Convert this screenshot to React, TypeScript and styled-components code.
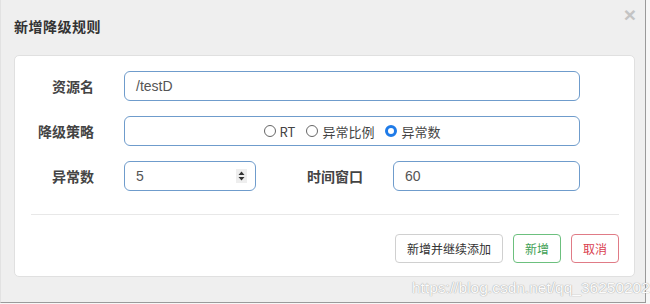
import styled, {createGlobalStyle} from 'styled-components'
import {FC} from 'react'

const Global = createGlobalStyle`
  html, body {
    margin: 0;
    padding: 0;
    background: #f7f7f7;
    font-family: "Noto Sans CJK SC", "Liberation Sans", sans-serif;
  }
`

const Dialog = styled.div`
  position: relative;
  box-sizing: border-box;
  width: 646px;
  height: 303px;
  background: #efefef;
  border-right: 1px solid #9a9a9a;
  border-bottom: 1px solid #9a9a9a;
  border-left: 1px solid #e2e2e2;
  padding: 14px 11px 0 13px;
`

const Header = styled.div`
  display: flex;
  justify-content: space-between;
  align-items: flex-start;
  height: 41px;
`

const Title = styled.h4`
  margin: 2px 0 0;
  font-size: 14px;
  font-weight: bold;
  color: #333;
  letter-spacing: 0.5px;
`

const Close = styled.span`
  font-family: "Liberation Sans", sans-serif;
  font-size: 21px;
  font-weight: bold;
  color: #c4c4c4;
  line-height: 1;
  margin-top: -10px;
  margin-right: -2px;
`

const Panel = styled.div`
  box-sizing: border-box;
  width: 621px;
  height: 222px;
  background: #fff;
  border: 1px solid #e0e0e0;
  border-radius: 5px;
  padding: 15px 15px 0 16px;
`

const Form = styled.div`
  display: flex;
  flex-direction: column;
`

const Row = styled.div`
  display: flex;
  align-items: center;
  height: 30px;
  margin-bottom: 15px;
`

const Label = styled.label<{ $w: number }>`
  width: ${p => p.$w}px;
  flex: none;
  text-align: right;
  font-size: 14px;
  font-weight: bold;
  color: #444;
  margin-right: 30px;
`

const Field = styled.div<{ $w: number }>`
  box-sizing: border-box;
  width: ${p => p.$w}px;
  height: 30px;
  flex: none;
  border: 1px solid #6f9ccc;
  border-radius: 6px;
  display: flex;
  align-items: center;
  padding: 0 11px;
  font-family: "Liberation Sans", sans-serif;
  font-size: 14px;
  color: #555;
`

const RadioGroup = styled(Field)`
  justify-content: center;
  gap: 11px;
  font-family: "Noto Sans CJK SC", "Liberation Sans", sans-serif;
  font-size: 13px;
`

const RadioItem = styled.span`
  display: inline-flex;
  align-items: center;
  gap: 4px;
  color: #444;
`

const Dot = styled.span<{ $on?: boolean }>`
  box-sizing: border-box;
  width: 12px;
  height: 12px;
  border-radius: 50%;
  border: ${p => (p.$on ? '3px solid #1f7be8' : '1px solid #666')};
  background: #fff;
`

const Spinner = styled.span`
  margin-left: auto;
  margin-right: -3px;
  width: 11px;
  height: 14px;
  background: #eee;
  display: flex;
  align-items: center;
  justify-content: center;
`

const Divider = styled.div`
  height: 1px;
  background: #e8e8e8;
  margin: 8px 0 19px;
`

const Footer = styled.div`
  display: flex;
  justify-content: flex-end;
  gap: 10px;
`

const Button = styled.button<{ $tone?: 'green' | 'red' }>`
  box-sizing: border-box;
  height: 29px;
  padding: 0 11px;
  background: #fff;
  border-radius: 4px;
  font-family: "Noto Sans CJK SC", sans-serif;
  font-size: 12px;
  border: 1px solid ${p => (p.$tone === 'green' ? '#6cc07e' : p.$tone === 'red' ? '#e07b86' : '#d0d0d0')};
  color: ${p => (p.$tone === 'green' ? '#3f9f55' : p.$tone === 'red' ? '#d9404f' : '#333')};
`

const Watermark = styled.div`
  position: absolute;
  left: 411px;
  top: 279px;
  font-family: "Liberation Sans", sans-serif;
  font-size: 15.5px;
  color: #fbfbfb;
  text-shadow: 0 0 1px #a8a8a8, 0 0 1px #a8a8a8;
  white-space: nowrap;
`

const Radio: FC<{label: string; on?: boolean}> = ({label, on}) => (
    <RadioItem><Dot $on={on}/>{label}</RadioItem>
)

const App: FC = () => {
    return <>
        <Global/>
        <Dialog>
            <Header>
                <Title>新增降级规则</Title>
                <Close>×</Close>
            </Header>
            <Panel>
                <Form>
                    <Row>
                        <Label $w={63}>资源名</Label>
                        <Field $w={456}>/testD</Field>
                    </Row>
                    <Row>
                        <Label $w={63}>降级策略</Label>
                        <RadioGroup $w={456}>
                            <Radio label="RT"/>
                            <Radio label="异常比例"/>
                            <Radio label="异常数" on/>
                        </RadioGroup>
                    </Row>
                    <Row>
                        <Label $w={63}>异常数</Label>
                        <Field $w={132}>
                            5
                            <Spinner>
                                <svg width="7" height="10" viewBox="0 0 7 10">
                                    <path d="M3.5 0.5 L6.5 4 H0.5 Z M3.5 9.5 L6.5 6 H0.5 Z" fill="#333"/>
                                </svg>
                            </Spinner>
                        </Field>
                        <Label $w={107}>时间窗口</Label>
                        <Field $w={187}>60</Field>
                    </Row>
                    <Divider/>
                    <Footer>
                        <Button>新增并继续添加</Button>
                        <Button $tone="green">新增</Button>
                        <Button $tone="red">取消</Button>
                    </Footer>
                </Form>
            </Panel>
            <Watermark>https://blog.csdn.net/qq_36250202</Watermark>
        </Dialog>
    </>
}

export default App
